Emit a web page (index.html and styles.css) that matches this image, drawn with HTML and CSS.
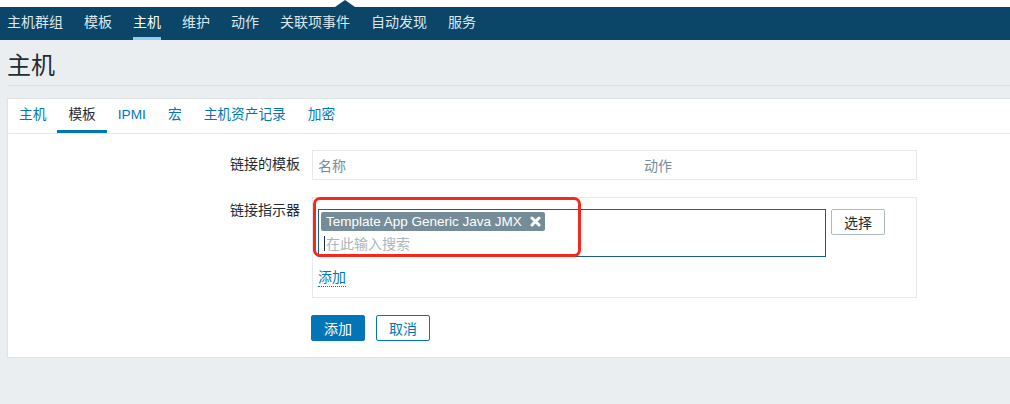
FILE: index.html
```html
<!DOCTYPE html>
<html lang="zh">
<head>
<meta charset="utf-8">
<title>主机</title>
<link rel="stylesheet" href="styles.css">
</head>
<body>
<header class="top">
  <div class="top-band"><span class="notch"></span></div>
  <nav class="mainnav">
    <a class="nav-item">主机群组</a>
    <a class="nav-item">模板</a>
    <a class="nav-item active">主机</a>
    <a class="nav-item">维护</a>
    <a class="nav-item">动作</a>
    <a class="nav-item">关联项事件</a>
    <a class="nav-item">自动发现</a>
    <a class="nav-item">服务</a>
  </nav>
</header>
<main class="page">
  <div class="title-row"><h1 class="title">主机</h1></div>
  <section class="panel">
    <div class="tabs">
      <a class="tab">主机</a>
      <a class="tab active">模板</a>
      <a class="tab">IPMI</a>
      <a class="tab">宏</a>
      <a class="tab">主机资产记录</a>
      <a class="tab">加密</a>
    </div>
    <div class="form">
      <div class="label l1">链接的模板</div>
      <div class="box table-box">
        <span class="col-name">名称</span>
        <span class="col-act">动作</span>
      </div>
      <div class="label l2">链接指示器</div>
      <div class="box link-box">
        <div class="ms-row">
          <div class="ms">
            <div class="tag"><span class="tag-text">Template App Generic Java JMX</span><svg class="tag-x" viewBox="0 0 11 11" width="11" height="11"><path d="M2 2 L9 9 M9 2 L2 9" stroke="#fff" stroke-width="3" stroke-linecap="round"/></svg></div>
            <div class="ms-input"><span class="caret"></span><span class="ph">在此输入搜索</span></div>
            <div class="annot"></div>
          </div>
          <button class="btn-select">选择</button>
        </div>
        <a class="add-link">添加</a>
      </div>
      <div class="spacer"></div>
      <div class="actions">
        <button class="btn-primary">添加</button>
        <button class="btn-outline">取消</button>
      </div>
    </div>
  </section>
</main>
</body>
</html>
```
FILE: styles.css
```css
* { box-sizing: border-box; }
html, body { margin: 0; padding: 0; }
body {
  background: #ebeef0;
  font-family: "Liberation Sans", "Noto Sans CJK SC", sans-serif;
  font-size: 14px;
  color: #1f2c33;
  overflow: hidden;
}
.top-band {
  height: 7px;
  background: #fff;
  position: relative;
}
.notch {
  position: absolute;
  left: 335px;
  top: 0;
  width: 0;
  height: 0;
  border-left: 10px solid transparent;
  border-right: 10px solid transparent;
  border-bottom: 7px solid #0b4567;
}
.mainnav {
  height: 33px;
  background: #0b4567;
  display: flex;
  align-items: stretch;
  padding-left: 7px;
  gap: 21px;
}
.nav-item {
  color: #dde7ee;
  line-height: 30px;
  border-bottom: 3px solid transparent;
  white-space: nowrap;
}
.nav-item.active {
  color: #ffffff;
  border-bottom-color: #8fd0f4;
}
.page { padding-left: 7px; }
.title-row {
  height: 46px;
  border-bottom: 1px solid #dde2e6;
  display: flex;
  align-items: center;
  padding-top: 7px;
}
.title {
  margin: 0;
  font-weight: normal;
  font-size: 24px;
  line-height: 32px;
  color: #1f2c33;
}
.panel {
  margin-top: 12px;
  background: #fff;
  border: 1px solid #dfe4e7;
  border-right: none;
  height: 260px;
}
.tabs {
  display: flex;
  height: 35px;
  border-bottom: 1px solid #e4e8eb;
}
.tab {
  color: #0275b8;
  font-size: 13.7px;
  padding: 0 11px;
  line-height: 31px;
  border-bottom: 3px solid transparent;
  white-space: nowrap;
}
.tab.active {
  color: #1f2c33;
  border-bottom-color: #0275b8;
}
.form {
  display: grid;
  grid-template-columns: 292px 605px;
  column-gap: 12px;
  row-gap: 17px;
  padding-top: 16px;
}
.label {
  text-align: right;
  line-height: 18px;
  color: #1f2c33;
}
.l1 { padding-top: 5px; }
.l2 { padding-top: 4px; }
.box {
  border: 1px solid #e6e9eb;
}
.table-box {
  height: 30px;
  display: flex;
  align-items: center;
  padding-left: 5px;
  color: #768d99;
}
.col-name { width: 326px; }
.link-box {
  height: 101px;
  padding: 11px 5px 0 5px;
}
.ms-row {
  display: flex;
  gap: 5px;
  align-items: flex-start;
}
.ms {
  position: relative;
  width: 508px;
  height: 48px;
  border: 1px solid #1a5b89;
  padding: 2px;
}
.tag {
  display: inline-flex;
  align-items: center;
  height: 19px;
  background: #768d99;
  color: #fff;
  border-radius: 2px;
  padding: 0 4px 0 5px;
  gap: 8px;
  font-size: 13.5px;
  line-height: 19px;
}
.tag-x { display: block; }
.ms-input {
  display: flex;
  align-items: center;
  height: 18px;
  margin-top: 3px;
  padding-left: 3px;
}
.caret {
  width: 1px;
  height: 15px;
  background: #1f2c33;
}
.ph { color: #a9b6bd; margin-left: 1px; }
.annot {
  position: absolute;
  left: -6px;
  top: -13px;
  width: 268px;
  height: 60px;
  border: 3px solid #f5291b;
  border-radius: 7px;
  pointer-events: none;
}
.btn-select {
  width: 54px;
  height: 26px;
  background: #fff;
  border: 1px solid #acbbc2;
  border-radius: 2px;
  font: inherit;
  color: #1f2c33;
  padding: 0;
}
.add-link {
  display: inline-block;
  margin-top: 12px;
  color: #0275b8;
  line-height: 17px;
  border-bottom: 1px dotted #0275b8;
}
.actions {
  display: flex;
  gap: 11px;
  margin-left: -1px;
}
.btn-primary, .btn-outline {
  width: 54px;
  height: 26px;
  border-radius: 2px;
  font: inherit;
  padding: 0;
}
.btn-primary {
  background: #0275b8;
  border: 1px solid #0275b8;
  color: #fff;
}
.btn-outline {
  background: #fff;
  border: 1px solid #0275b8;
  color: #0275b8;
}
```
